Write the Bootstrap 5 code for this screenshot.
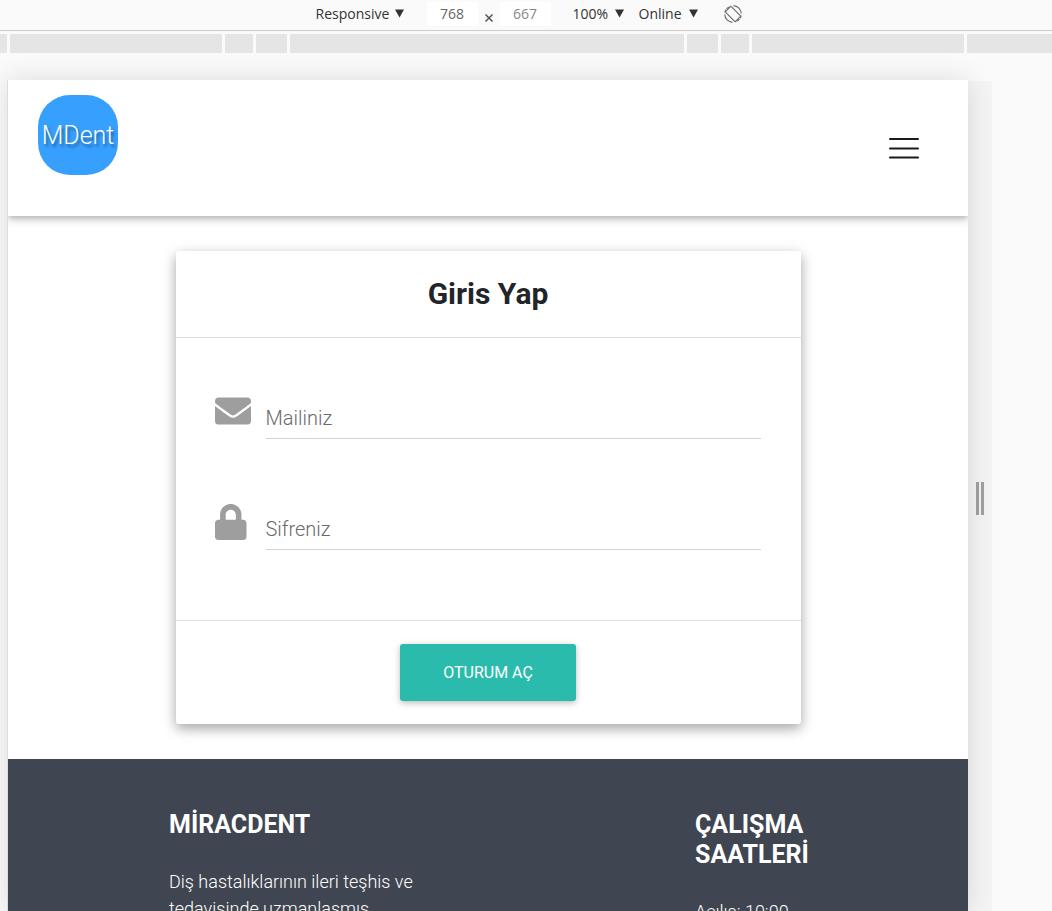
<!DOCTYPE html>
<html lang="tr">
<head>
<meta charset="utf-8">
<meta name="viewport" content="width=device-width, initial-scale=1">
<title>MDent - Giris Yap</title>
<link href="https://cdn.jsdelivr.net/npm/bootstrap@5.3.0/dist/css/bootstrap.min.css" rel="stylesheet">
<style>
  body { font-family: Roboto, sans-serif; font-weight: 300; background: #fafafa; color: #212529; }

  /* Device toolbar */
  .tools { height: 31px; border-bottom: 1px solid #ccc; font: 400 14px/24px "Open Sans", sans-serif; color: #333; padding: 0 0 3px 6px; }
  .tools select { appearance: none; border: 0; background: none; padding: 0; color: inherit; font: inherit; }
  .tools input { width: 51px; height: 24px; border: 0; border-radius: 2px; background: #fff; padding: 0; text-align: center; color: #666; font: inherit; }
  .tools input:disabled { color: #888; }
  .pick-device { width: 78px; }
  .pick-zoom { width: 41px; }
  .pick-net { width: 49px; }
  .gap-wide { margin-right: 22px; }
  .gap-narrow { margin-right: 14px; }

  /* Breakpoint ruler, mirrored around the middle of the page */
  .ruler { gap: 3px; padding-top: 3px; }
  .ruler span { height: 19px; background: #e5e5e5; }
  .r-edge { flex: 0 0 7px; }
  .r-side { flex: 1 1 212px; }
  .r-tablet { flex: 0 0 28px; }
  .r-laptop { flex: 0 0 31px; }
  .r-mid { flex: 0 1 394px; }
  .r-end { flex: 0 0 85px; }

  /* Device viewport */
  .stage { padding: 27px 60px 0 7px; }
  .device { min-width: 0; border-left: 1px solid #ddd; background: #fff; box-shadow: 0 0 26px rgba(0,0,0,.12); z-index: 1; }
  .resizer { flex: 0 0 24px; margin-top: 1px; border: 0; background: #f4f4f4; gap: 2px; padding: 4px 0 0; cursor: ew-resize; }
  .resizer span { width: 3px; height: 33px; background: #a0a0a0; }
  .device-inner { height: 100%; overflow: hidden; }

  .site-bar { height: 136px; padding: 0 49px 0 30px; box-shadow: 0 2px 5px rgba(0,0,0,.16), 0 3px 10px rgba(0,0,0,.2); }
  .logo { width: 80px; height: 80px; border-radius: 32px; background: #37a0ff; margin-top: 15px; padding-top: 2px; color: #fff; font-size: 25px; text-shadow: 2px 3px 3px rgba(0,0,0,.4); }
  .logo:hover { color: #fff; }

  .login { width: 66%; max-width: 625px; margin: 35px auto; border: 0; border-radius: 3px; box-shadow: 0 5px 11px rgba(0,0,0,.18), 0 4px 15px rgba(0,0,0,.2); }
  .login-head { height: 87px; border-bottom: 1px solid #dedede; font-size: 30px; font-weight: 700; }
  .login-fields { padding: 56px 40px 70px 39px; }
  .field { height: 45px; }
  .field + .field { margin-top: 66px; }
  .field svg { flex: 0 0 36px; margin: 0 15px 11px 0; fill: #9e9e9e; }
  .field input { min-width: 0; height: 45px; border: 0; border-bottom: 1px solid #ced4da; padding: 4px 0 0; font-size: 20px; font-weight: 300; background: none; border-radius: 0; outline: 0; }
  .field input::placeholder { color: #6a6a6a; opacity: 1; }
  .login-foot { height: 104px; border-top: 1px solid #dedede; }
  .btn-login { width: 176px; height: 57px; border-radius: 3px; background: #2bbbad; color: #fff; font-size: 16px; box-shadow: 0 2px 5px rgba(0,0,0,.16), 0 2px 10px rgba(0,0,0,.12); }
  .btn-login:hover { background: #30cfc0; color: #fff; }

  .site-foot { background: #3f4551; color: #fff; padding: 51px 160px 50px 161px; font-size: 18px; line-height: 27px; }
  .site-foot h2 { font-size: 25px; line-height: 30px; font-weight: 700; margin: 0 0 28px; }
  .about { width: 250px; }
  .hours { width: 113px; }
</style>
</head>
<body>
<div class="vh-100 d-flex flex-column overflow-hidden">
  <div class="tools d-flex align-items-center justify-content-center flex-shrink-0">
    <span class="d-flex align-items-center gap-wide">
      <select class="pick-device" aria-label="Device"><option>Responsive</option></select>
      <svg width="11" height="9" aria-hidden="true"><path d="M1 0.500h9L5.500 8.500z" fill="#333"/></svg>
    </span>
    <input type="text" value="768" aria-label="Width">
    <svg class="mx-1 mt-2" width="14" height="10" aria-hidden="true"><path d="M3.500 1.500l7 7M10.500 1.500l-7 7" stroke="#555" stroke-width="1.500"/></svg>
    <input class="gap-wide" type="text" value="667" aria-label="Height" disabled>
    <span class="d-flex align-items-center gap-narrow">
      <select class="pick-zoom" aria-label="Zoom"><option>100%</option></select>
      <svg width="11" height="9" aria-hidden="true"><path d="M1 0.500h9L5.500 8.500z" fill="#333"/></svg>
    </span>
    <span class="d-flex align-items-center me-4">
      <select class="pick-net" aria-label="Throttling"><option>Online</option></select>
      <svg width="11" height="9" aria-hidden="true"><path d="M1 0.500h9L5.500 8.500z" fill="#333"/></svg>
    </span>
    <button class="btn p-0 border-0 lh-1" type="button" aria-label="Rotate">
      <svg width="20" height="20" viewBox="0 0 20 20" fill="none" stroke="#6e6e6e" stroke-width="1.200"><rect x="6" y="3" width="8" height="14" rx="1" transform="rotate(-45 10 10)"/><path d="M10.500 1.700a8.300 8.300 0 0 1 7.800 7.800M9.500 18.300a8.300 8.300 0 0 1-7.800-7.800"/><path d="M1.800 8.500a8.300 8.300 0 0 1 6-6.300M18.200 11.500a8.300 8.300 0 0 1-6 6.300" stroke-dasharray="3 1"/></svg>
    </button>
  </div>

  <div class="ruler d-flex flex-shrink-0" aria-hidden="true">
    <span class="r-edge"></span><span class="r-side"></span><span class="r-tablet"></span><span class="r-laptop"></span><span class="r-mid"></span><span class="r-laptop"></span><span class="r-tablet"></span><span class="r-side"></span><span class="r-end"></span>
  </div>

  <div class="stage d-flex flex-grow-1 overflow-hidden">
    <div class="device position-relative flex-grow-1">
      <div class="device-inner">
        <header class="site-bar d-flex justify-content-between">
          <a class="logo d-flex align-items-center justify-content-center text-decoration-none" href="#">MDent</a>
          <button class="btn p-0 border-0 align-self-center" type="button" aria-label="Menu">
            <svg class="d-block" width="30" height="22" stroke="#1c191b" stroke-width="2" stroke-linecap="round"><path d="M1 2h28M1 11.500h28M1 20.500h28"/></svg>
          </button>
        </header>

        <main>
          <form class="login card">
            <h1 class="login-head d-flex align-items-center justify-content-center m-0">Giris Yap</h1>
            <div class="login-fields">
              <div class="field d-flex align-items-center">
                <label for="mail" aria-label="Mailiniz"><svg class="d-block" width="36" height="36" viewBox="0 0 512 512"><path d="M502.300 190.800c3.900-3.100 9.700-.2 9.700 4.700V400c0 26.500-21.500 48-48 48H48c-26.500 0-48-21.500-48-48V195.600c0-5 5.700-7.800 9.700-4.700 22.400 17.400 52.100 39.500 154.100 113.600 21.100 15.400 56.700 47.800 92.200 47.600 35.700.3 72-32.800 92.300-47.600 102-74.100 131.600-96.300 154-113.700zM256 320c23.200.4 56.600-29.200 73.400-41.400 132.700-96.300 142.800-104.700 173.400-128.700 5.800-4.500 9.200-11.500 9.200-18.900v-19c0-26.500-21.500-48-48-48H48c-26.500 0-48 21.500-48 48v19c0 7.400 3.400 14.300 9.200 18.900 30.600 23.900 40.700 32.400 173.400 128.700 16.800 12.200 50.200 41.800 73.400 41.400z"/></svg></label>
                <input id="mail" class="flex-grow-1" type="email" placeholder="Mailiniz">
              </div>
              <div class="field d-flex align-items-center">
                <label for="pass" aria-label="Sifreniz"><svg class="d-block" width="36" height="36" viewBox="0 0 512 512"><path d="M400 224h-24v-72C376 68.200 307.800 0 224 0S72 68.200 72 152v72H48c-26.500 0-48 21.500-48 48v192c0 26.500 21.500 48 48 48h352c26.500 0 48-21.500 48-48V272c0-26.500-21.500-48-48-48zm-104 0H152v-72c0-39.700 32.300-72 72-72s72 32.300 72 72v72z"/></svg></label>
                <input id="pass" class="flex-grow-1" type="password" placeholder="Sifreniz">
              </div>
            </div>
            <div class="login-foot d-flex align-items-center justify-content-center">
              <button class="btn btn-login" type="submit">OTURUM AÇ</button>
            </div>
          </form>
        </main>

        <footer class="site-foot d-flex justify-content-between">
          <section class="about">
            <h2>MİRACDENT</h2>
            <p>Diş hastalıklarının ileri teşhis ve tedavisinde uzmanlaşmış</p>
          </section>
          <section class="hours">
            <h2>ÇALIŞMA SAATLERİ</h2>
            <p>Açılış: 10:00</p>
          </section>
        </footer>
      </div>
    </div>
    <button class="resizer d-flex align-items-center justify-content-center" type="button" aria-label="Resize"><span></span><span></span></button>
  </div>
</div>
<script src="https://cdn.jsdelivr.net/npm/bootstrap@5.3.0/dist/js/bootstrap.bundle.min.js"></script>
</body>
</html>
